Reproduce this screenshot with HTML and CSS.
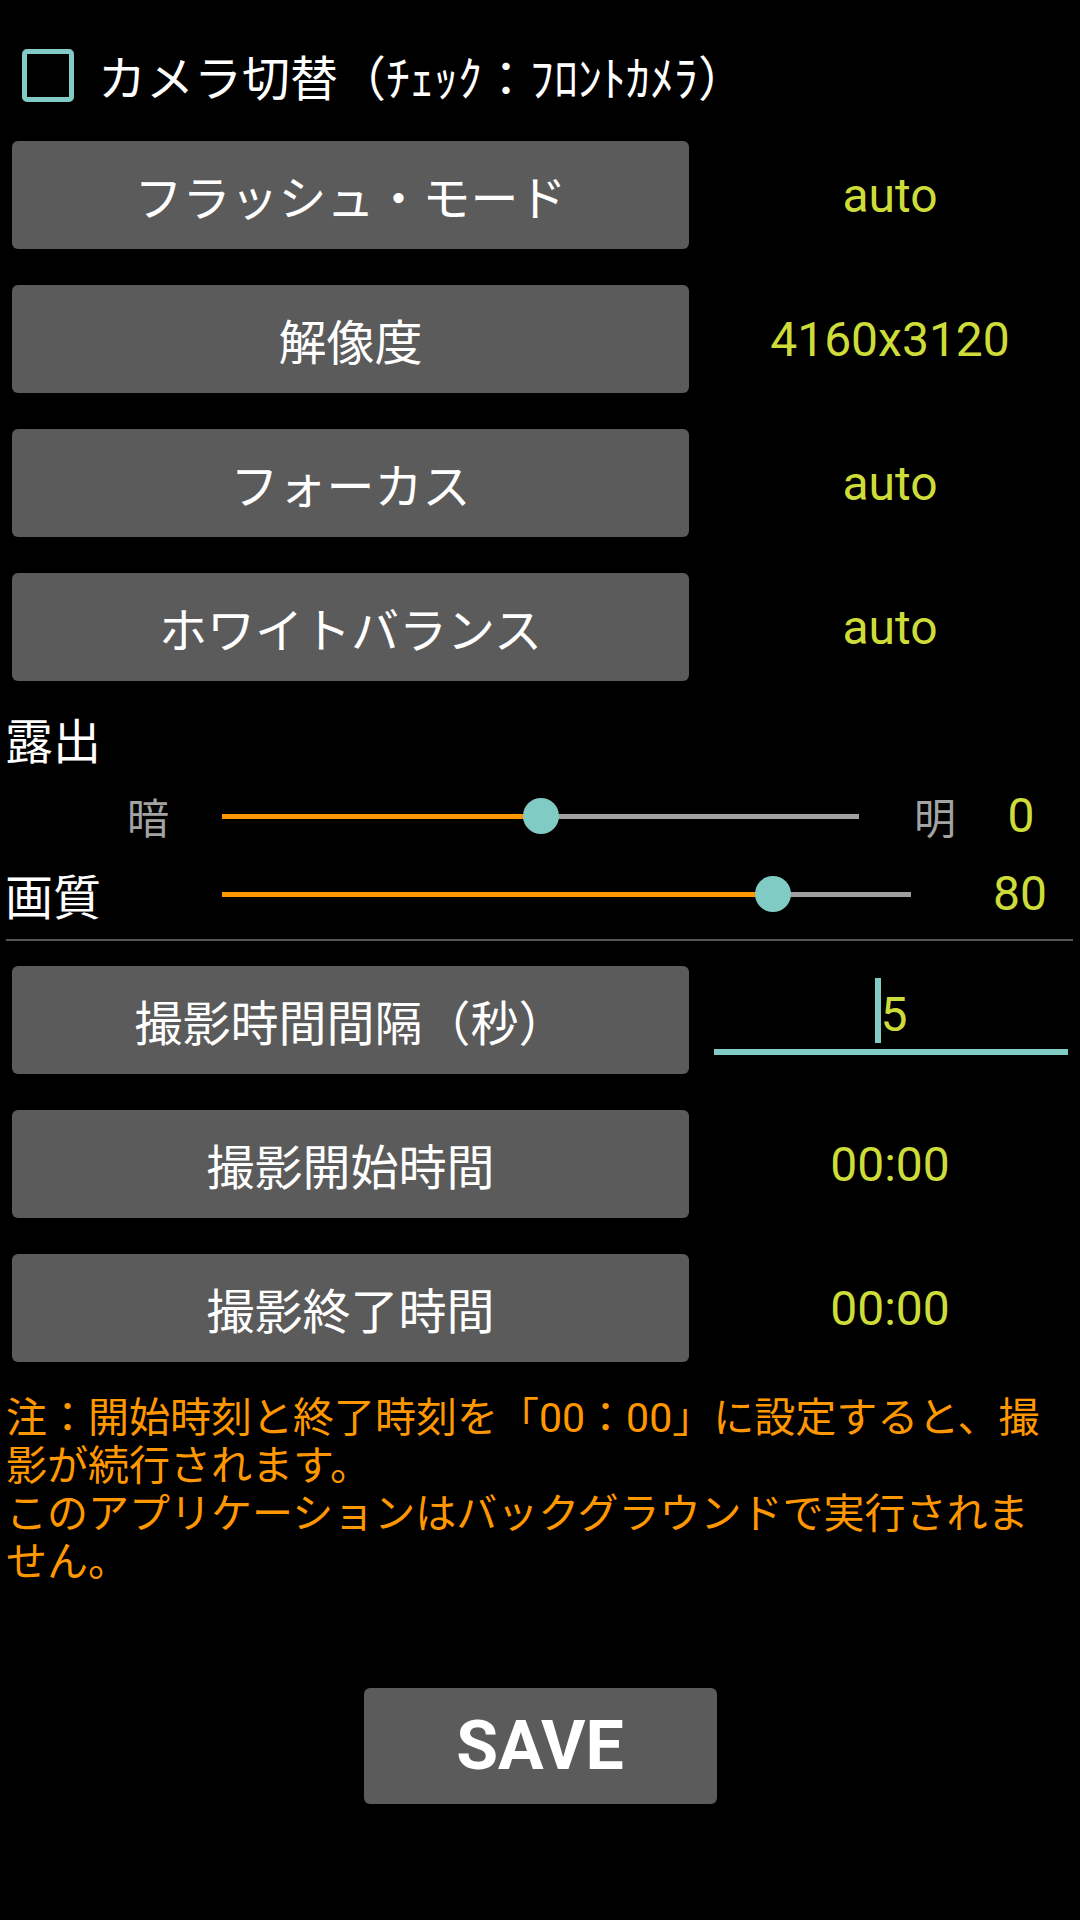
FILE: index.html
```html
<!DOCTYPE html>
<html lang="ja">
<head>
    <meta charset="UTF-8">
    <meta name="viewport" content="width=device-width, initial-scale=1.0">
    <title>カメラ設定</title>
    <link rel="stylesheet" href="styles.css">
</head>
<body>
    <div class="check-row">
        <span class="checkbox"></span>
        <span class="check-text">カメラ切替（ﾁｪｯｸ：ﾌﾛﾝﾄｶﾒﾗ）</span>
    </div>

    <div class="setting first">
        <div class="btn">フラッシュ・モード</div>
        <div class="value">auto</div>
    </div>
    <div class="setting">
        <div class="btn">解像度</div>
        <div class="value">4160x3120</div>
    </div>
    <div class="setting">
        <div class="btn">フォーカス</div>
        <div class="value">auto</div>
    </div>
    <div class="setting">
        <div class="btn">ホワイトバランス</div>
        <div class="value">auto</div>
    </div>

    <div class="section-label">露出</div>
    <div class="slider-row exposure">
        <span class="dim-label">暗</span>
        <div class="track track-exposure">
            <div class="fill" style="width:50%"></div>
            <div class="thumb" style="left:50%"></div>
        </div>
        <span class="end-label">明</span>
        <span class="slider-value">0</span>
    </div>
    <div class="slider-row quality">
        <span class="row-label">画質</span>
        <div class="track track-quality">
            <div class="fill" style="width:80%"></div>
            <div class="thumb" style="left:80%"></div>
        </div>
        <span class="slider-value wide">80</span>
    </div>

    <div class="divider"></div>

    <div class="setting interval">
        <div class="btn">撮影時間間隔（秒）</div>
        <div class="edit"><span class="cursor"></span><span class="edit-text">5</span></div>
    </div>
    <div class="setting">
        <div class="btn">撮影開始時間</div>
        <div class="value">00:00</div>
    </div>
    <div class="setting">
        <div class="btn">撮影終了時間</div>
        <div class="value">00:00</div>
    </div>

    <div class="note">
        <p>注：開始時刻と終了時刻を「00：00」に設定すると、撮影が続行されます。</p>
        <p>このアプリケーションはバックグラウンドで実行されません。</p>
    </div>

    <div class="save-wrap">
        <button class="save">SAVE</button>
    </div>
</body>
</html>
```

FILE: styles.css
```css
body { margin: 0; padding: 0; background: #000; color: #fff; font-family: Roboto, "Noto Sans CJK JP", sans-serif; width: 1080px; height: 1920px; overflow: hidden; }

.check-row { display: flex; align-items: center; padding: 48px 0 0 22px; height: 54px; }
.checkbox { width: 52px; height: 53px; box-sizing: border-box; border: 5px solid #80cbc4; border-radius: 5px; }
.check-text { margin-left: 24px; font-size: 48px; line-height: 54px; font-family: "Noto Sans CJK JP", sans-serif; }

.setting { display: flex; align-items: center; height: 108px; margin-top: 36px; }
.setting.first { margin-top: 39px; }
.btn { width: 677px; height: 108px; margin-left: 12px; background: #5b5b5b; border-radius: 6px; display: flex; align-items: center; justify-content: center; font-family: "Noto Sans CJK JP", sans-serif; font-size: 48px; color: #fff; }
.value { flex: 1; margin-left: 11px; text-align: center; font-size: 48px; color: #cddc39; }

.section-label { margin-top: 29px; padding-left: 5px; font-family: "Noto Sans CJK JP", sans-serif; font-size: 48px; line-height: 56px; }

.slider-row { display: flex; align-items: center; height: 40px; }
.slider-row.exposure { margin-top: 30px; }
.slider-row.quality { margin-top: 38px; }
.dim-label { width: 222px; box-sizing: border-box; padding-left: 127px; font-family: "Noto Sans CJK JP", sans-serif; font-size: 42px; line-height: 40px; color: #a3a3a3; }
.row-label { width: 222px; box-sizing: border-box; padding-left: 5px; font-family: "Noto Sans CJK JP", sans-serif; font-size: 48px; line-height: 40px; }
.end-label { margin-left: 55px; font-family: "Noto Sans CJK JP", sans-serif; font-size: 42px; line-height: 40px; color: #a3a3a3; }
.slider-value { flex: 1; margin-left: 6px; text-align: center; font-size: 48px; line-height: 40px; color: #cddc39; }
.slider-value.wide { margin-left: 49px; }

.track { position: relative; height: 5px; background: #a0a0a0; }
.track-exposure { width: 637px; }
.track-quality { width: 689px; }
.fill { height: 100%; background: #ff9800; }
.thumb { position: absolute; top: 50%; width: 36px; height: 36px; border-radius: 50%; background: #80cbc4; transform: translate(-50%, -50%); }

.divider { height: 2px; margin: 25px 7px 0 6px; background: #555; }
.setting.interval { margin-top: 25px; align-items: flex-start; }
.edit { width: 354px; margin: 12px 0 0 25px; height: 77px; box-sizing: border-box; padding-bottom: 6px; border-bottom: 6px solid #80cbc4; display: flex; align-items: center; justify-content: center; }
.cursor { width: 6px; height: 65px; background: #80cbc4; }
.edit-text { padding-top: 8px; font-size: 48px; line-height: 48px; color: #cddc39; }

/* Roboto first keeps each line's box inside its 48px line */
.note { margin-top: 32px; padding: 0 30px 0 6px; font-family: Roboto, "Noto Sans CJK JP", sans-serif; font-size: 41px; line-height: 48px; color: #ff9800; }
.note p { margin: 0; }

.save-wrap { display: flex; justify-content: center; margin-top: 102px; }
.save { width: 353px; height: 116px; background: #5b5b5b; color: #fff; border: none; border-radius: 6px; font-family: Roboto, sans-serif; font-weight: bold; font-size: 68px; padding: 0; }
```
